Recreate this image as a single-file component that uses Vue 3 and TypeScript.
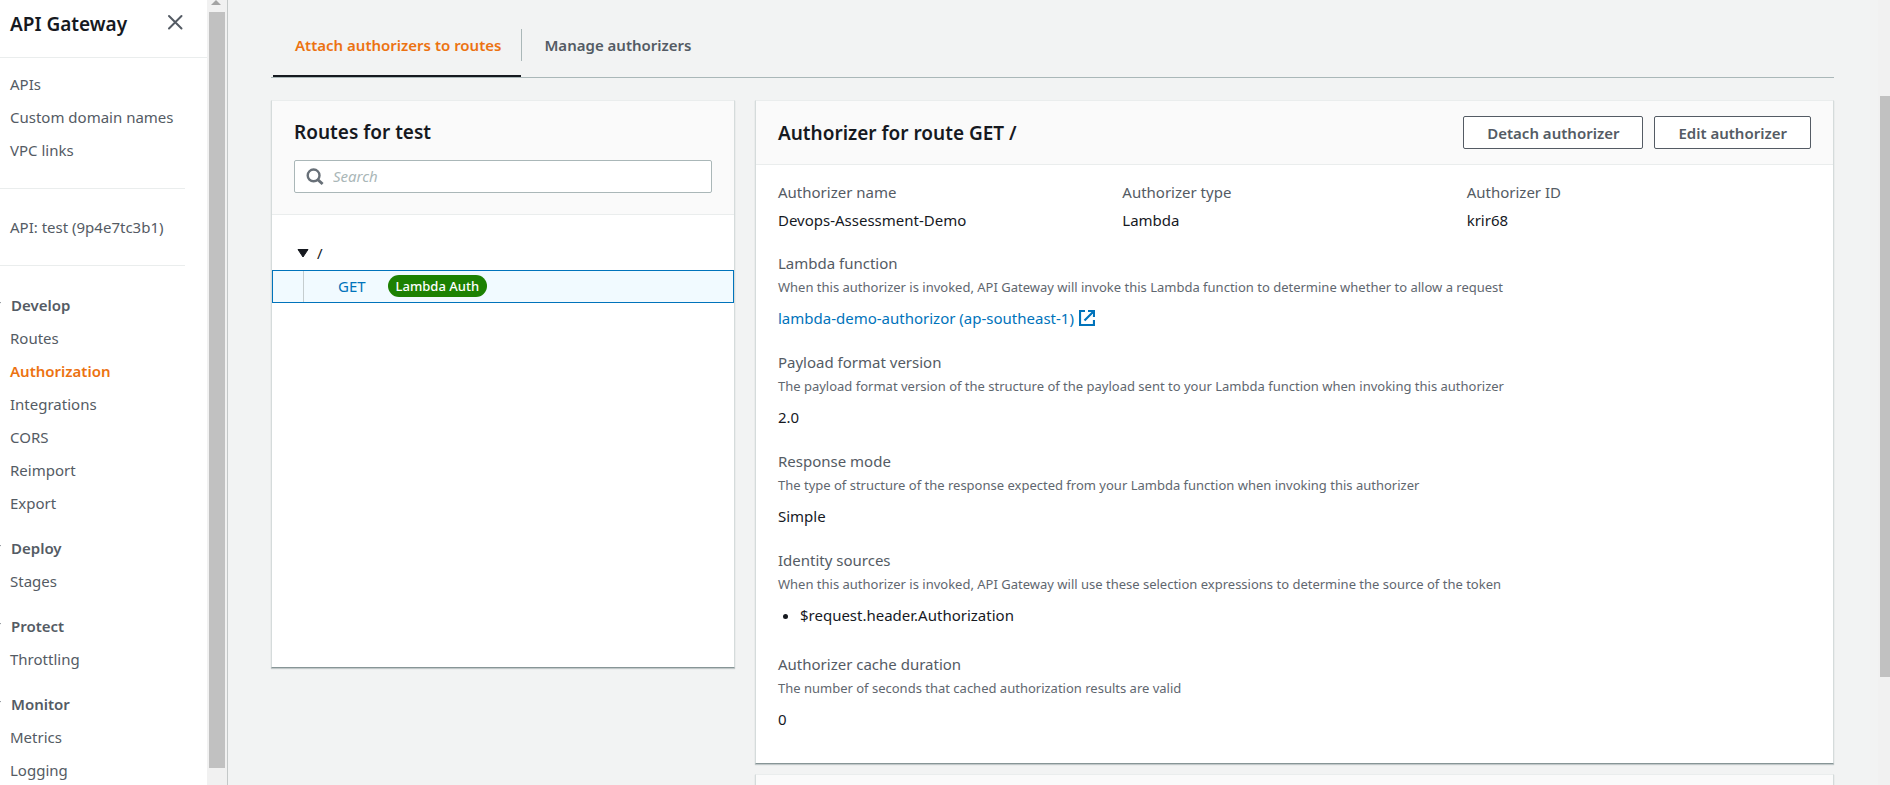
<script setup lang="ts">
import { ref } from 'vue'

interface NavGroup {
  title: string
  items: string[]
}

interface Detail {
  label: string
  hint: string
  value: string
  kind: 'text' | 'link' | 'list'
}

const topLinks: string[] = ['APIs', 'Custom domain names', 'VPC links']

const groups: NavGroup[] = [
  { title: 'Develop', items: ['Routes', 'Authorization', 'Integrations', 'CORS', 'Reimport', 'Export'] },
  { title: 'Deploy', items: ['Stages'] },
  { title: 'Protect', items: ['Throttling'] },
  { title: 'Monitor', items: ['Metrics', 'Logging'] },
]

const activeItem = ref('Authorization')

const tabs: string[] = ['Attach authorizers to routes', 'Manage authorizers']
const activeTab = ref(0)
const query = ref('')

const summary = [
  { label: 'Authorizer name', value: 'Devops-Assessment-Demo' },
  { label: 'Authorizer type', value: 'Lambda' },
  { label: 'Authorizer ID', value: 'krir68' },
]

const details: Detail[] = [
  {
    label: 'Lambda function',
    hint: 'When this authorizer is invoked, API Gateway will invoke this Lambda function to determine whether to allow a request',
    value: 'lambda-demo-authorizor (ap-southeast-1)',
    kind: 'link',
  },
  {
    label: 'Payload format version',
    hint: 'The payload format version of the structure of the payload sent to your Lambda function when invoking this authorizer',
    value: '2.0',
    kind: 'text',
  },
  {
    label: 'Response mode',
    hint: 'The type of structure of the response expected from your Lambda function when invoking this authorizer',
    value: 'Simple',
    kind: 'text',
  },
  {
    label: 'Identity sources',
    hint: 'When this authorizer is invoked, API Gateway will use these selection expressions to determine the source of the token',
    value: '$request.header.Authorization',
    kind: 'list',
  },
  {
    label: 'Authorizer cache duration',
    hint: 'The number of seconds that cached authorization results are valid',
    value: '0',
    kind: 'text',
  },
]
</script>

<template>
  <div class="app">
    <aside class="sidebar">
      <header class="side-head">
        <h2>API Gateway</h2>
        <button type="button" class="close" aria-label="Close navigation">
          <svg width="16" height="16" viewBox="0 0 16 16" fill="none" stroke="#545b64" stroke-width="2">
            <path d="M2 2 14.5 14.5M14.5 2 2 14.5" stroke-linecap="round" />
          </svg>
        </button>
      </header>
      <nav class="side-nav">
        <ul class="links">
          <li v-for="link in topLinks" :key="link"><a href="#">{{ link }}</a></li>
        </ul>
        <div class="api-name"><a href="#">API: test (9p4e7tc3b1)</a></div>
        <section v-for="group in groups" :key="group.title" class="group">
          <button type="button" class="group-title" aria-expanded="true">
            <svg width="11" height="8" viewBox="0 0 11 8"><path d="M0 0H11L5.5 8Z" fill="#687078" /></svg>
            {{ group.title }}
          </button>
          <ul>
            <li v-for="item in group.items" :key="item">
              <a href="#" :class="{ active: item === activeItem }" @click.prevent="activeItem = item">{{ item }}</a>
            </li>
          </ul>
        </section>
      </nav>
    </aside>
    <div class="track side-track" aria-hidden="true">
      <svg class="arrow" width="10" height="5" viewBox="0 0 10 5"><path d="M5 0 10 5H0Z" fill="#a3a3a3" /></svg>
      <div class="thumb"></div>
    </div>

    <main class="main">
      <div class="tabs" role="tablist">
        <button
          v-for="(tab, i) in tabs"
          :key="tab"
          type="button"
          role="tab"
          class="tab"
          :class="{ selected: i === activeTab }"
          :aria-selected="i === activeTab"
          @click="activeTab = i"
        >
          <span>{{ tab }}</span>
        </button>
      </div>

      <div class="columns">
        <section class="card routes">
          <header class="card-head routes-head">
            <h3>Routes for test</h3>
            <label class="search">
              <svg width="18" height="18" viewBox="0 0 18 18" fill="none" stroke="#687078" stroke-width="2.4">
                <circle cx="7.6" cy="7.4" r="5.9" />
                <path d="M11.8 11.6 16.6 16" stroke-width="2.8" />
              </svg>
              <input v-model="query" type="text" placeholder="Search" aria-label="Search routes" />
            </label>
          </header>
          <div class="tree">
            <button type="button" class="node" aria-expanded="true">
              <svg width="12" height="9" viewBox="0 0 12 9"><path d="M1 .5H11L6 8Z" fill="#16191f" stroke="#16191f" stroke-linejoin="round" /></svg>
              /
            </button>
            <div class="route">
              <a href="#">GET</a>
              <span class="badge">Lambda Auth</span>
            </div>
          </div>
        </section>

        <div class="stack">
          <section class="card">
            <header class="card-head auth-head">
              <h3>Authorizer for route GET /</h3>
              <div class="actions">
                <button type="button" class="btn">Detach authorizer</button>
                <button type="button" class="btn">Edit authorizer</button>
              </div>
            </header>
            <div class="body">
              <div class="summary">
                <div v-for="field in summary" :key="field.label">
                  <div class="label">{{ field.label }}</div>
                  <div class="value">{{ field.value }}</div>
                </div>
              </div>
              <div v-for="d in details" :key="d.label" class="detail">
                <div class="label">{{ d.label }}</div>
                <div class="hint">{{ d.hint }}</div>
                <a v-if="d.kind === 'link'" href="#" class="value ext">
                  {{ d.value }}
                  <svg width="16" height="16" viewBox="0 0 16 16" fill="none" stroke="#0073bb" stroke-width="2">
                    <path d="M6 1H1V15H15V10M9 1H15V7M14.5 1.5 5.5 10.5" stroke-width="2.2" />
                  </svg>
                </a>
                <ul v-else-if="d.kind === 'list'" class="value list">
                  <li>{{ d.value }}</li>
                </ul>
                <div v-else class="value">{{ d.value }}</div>
              </div>
            </div>
          </section>
          <section class="card next"></section>
        </div>
      </div>
    </main>
    <div class="track page-track" aria-hidden="true"><div class="thumb"></div></div>
  </div>
</template>

<style>
body {
  margin: 0;
  overflow: hidden;
}
</style>

<style scoped>
* {
  box-sizing: border-box;
}

.app {
  display: flex;
  height: 100vh;
  overflow: hidden;
  background: #f2f3f3;
  color: #16191f;
  font-family: 'Noto Sans', 'Open Sans', sans-serif;
  font-size: 15px;
  line-height: 22px;
}

h2,
h3,
ul {
  margin: 0;
  padding: 0;
}

ul {
  list-style: none;
}

button {
  margin: 0;
  padding: 0;
  border: 0;
  background: none;
  color: inherit;
  font: inherit;
  cursor: pointer;
}

a {
  color: #0073bb;
  text-decoration: none;
}

.sidebar {
  flex: 0 0 207px;
  overflow: hidden;
  background: #fff;
  color: #545b64;
}

.side-head {
  display: flex;
  align-items: flex-start;
  justify-content: space-between;
  height: 58px;
  padding: 12px 24px 0 10px;
  border-bottom: 1px solid #eaeded;
}

.side-head h2 {
  color: #16191f;
  font-size: 19px;
  line-height: 24px;
  font-weight: 600;
}

.close {
  display: flex;
  padding-top: 2px;
}

.side-nav {
  margin-right: 22px;
}

.side-nav a {
  display: block;
  padding-left: 10px;
  color: #545b64;
  line-height: 33px;
  white-space: nowrap;
}

.side-nav a.active {
  color: #ec7211;
  font-weight: 600;
}

.links {
  padding: 10px 0 21px;
  border-bottom: 1px solid #eaeded;
}

.api-name {
  margin-bottom: 23px;
  padding: 22px 0 21px;
  border-bottom: 1px solid #eaeded;
}

.group {
  margin-bottom: 12px;
}

.group-title {
  display: flex;
  align-items: center;
  gap: 10px;
  margin-left: -10px;
  font-weight: 600;
  line-height: 33px;
}

.track {
  display: flex;
  flex-direction: column;
  background: #f1f1f1;
}

.thumb {
  background: #c1c1c1;
}

.side-track {
  flex: 0 0 21px;
  padding-right: 2px;
  border-right: 1px solid #c4c8c8;
}

.arrow {
  align-self: center;
  flex: none;
  margin-bottom: 7px;
}

.side-track .thumb {
  height: 96.3%;
  margin-left: 2px;
}

.page-track {
  flex: 0 0 12px;
  padding-left: 2px;
}

.page-track .thumb {
  height: 74%;
  margin-top: 96px;
}

.main {
  flex: 1;
  min-width: 0;
  padding: 0 44px 0 43px;
}

.tabs {
  display: flex;
  height: 78px;
  padding: 29px 0 0 2px;
  border-bottom: 1px solid #aab7b8;
}

.tab {
  display: flex;
  align-items: flex-start;
  color: #545b64;
  font-weight: 600;
  line-height: 32px;
}

.tab span {
  padding: 0 20px 0 22px;
}

.tab + .tab span {
  border-left: 1px solid #aab7b8;
}

.tab.selected {
  border-bottom: 2px solid #16191f;
  color: #ec7211;
}

.columns {
  display: grid;
  grid-template-columns: 43fr 100fr;
  align-items: start;
  gap: 20px;
  margin-top: 22px;
}

.card {
  border: 1px solid #d5dbdb;
  border-top-color: #eaeded;
  border-bottom-color: #879596;
  background: #fff;
  box-shadow: 0 1px 1px rgba(0, 28, 36, 0.2);
}

.card-head {
  border-bottom: 1px solid #eaeded;
  background: #fafafa;
}

.card h3 {
  font-size: 19px;
  font-weight: 600;
  line-height: 24px;
}

.routes {
  min-height: 568px;
}

.routes-head {
  padding: 19px 22px 21px;
}

.search {
  display: flex;
  align-items: center;
  gap: 9px;
  height: 33px;
  margin-top: 16px;
  padding: 0 11px;
  border: 1px solid #aab7b8;
  border-radius: 2px;
  background: #fff;
}

.search input {
  flex: 1;
  min-width: 0;
  height: 30px;
  padding: 0 0 2px;
  border: 0;
  outline: 0;
  background: none;
  color: #16191f;
  font: inherit;
}

.search input::placeholder {
  color: #aab7b8;
  font-style: italic;
}

.tree {
  padding-top: 22px;
}

.node {
  display: flex;
  align-items: center;
  gap: 8px;
  padding-left: 25px;
  line-height: 33px;
}

.route {
  display: flex;
  align-items: center;
  gap: 22px;
  height: 33px;
  padding: 0 0 1px 65px;
  border: 1px solid #0073bb;
  background: linear-gradient(#c5cdcf, #c5cdcf) 30px 0 / 1px 100% no-repeat #f1faff;
}

.badge {
  padding: 0 8px;
  border-radius: 11px;
  background: #1d8102;
  color: #fff;
  font-size: 13px;
  font-weight: 500;
}

.auth-head {
  display: flex;
  align-items: center;
  justify-content: space-between;
  padding: 15px 22px;
}

.actions {
  display: flex;
  gap: 11px;
}

.btn {
  height: 33px;
  padding: 0 23px;
  border: 1px solid #545b64;
  border-radius: 2px;
  background: #fff;
  color: #545b64;
  font-weight: 600;
  line-height: 30px;
}

.body {
  padding: 15px 22px 12px;
}

.summary {
  display: grid;
  grid-template-columns: repeat(3, 1fr);
  margin-bottom: 20px;
}

.summary .value {
  margin-top: 5px;
}

.label {
  color: #545b64;
  line-height: 24px;
}

.hint {
  color: #5f676f;
  font-size: 13px;
  line-height: 24px;
}

.detail {
  margin-bottom: 21px;
}

.detail .value {
  margin-top: 8px;
}

.ext {
  display: flex;
  align-items: center;
  gap: 5px;
}

.list {
  padding: 0 0 5px 22px;
  list-style: disc;
}

.next {
  height: 100px;
  margin-top: 10px;
  background: #fafafa;
}
</style>
